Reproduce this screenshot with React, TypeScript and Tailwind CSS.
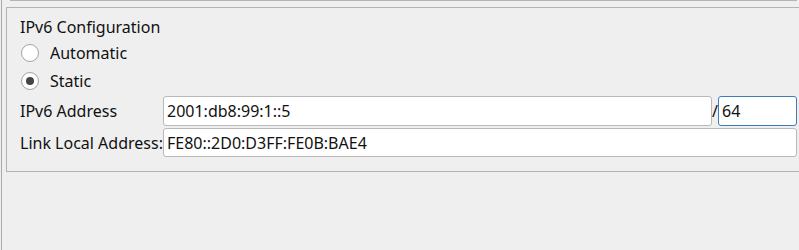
import React from 'react';

const Radio: React.FC<{ label: string; checked?: boolean }> = ({ label, checked }) => {
  return (
    <div className="flex items-center h-[28px]">
      <span className="ml-px flex h-[18px] w-[18px] shrink-0 items-center justify-center rounded-full border border-[#a3a3a3] bg-white">
        {checked && <span className="h-[8px] w-[8px] rounded-full bg-[#454545]" />}
      </span>
      <span className="ml-[11px] leading-[20px]">{label}</span>
    </div>
  );
};

const Field: React.FC<{ value: string; className?: string; focused?: boolean }> = ({ value, className, focused }) => {
  return (
    <div
      className={
        'flex items-center rounded-[3px] bg-white pl-[3px] leading-[20px] ' +
        (focused ? 'border border-[#3c7dba] ' : 'border border-[#b9b9b9] ') +
        (className ?? '')
      }
    >
      {value}
    </div>
  );
};

const App: React.FC = () => {
  return (
    <div className="w-[799px] h-[250px] overflow-hidden bg-[#efefef] font-['Noto_Sans',sans-serif] text-[16px] text-[#111111]">
      <div className="ml-px h-full border-l border-[#a9a9a9]">
        {/* bottom edge of the field above */}
        <div className="ml-[8px] h-px w-[787px] bg-[#b4b4b4]" />

        {/* IPv6 group box */}
        <div className="mt-[6px] ml-[4px] h-[165px] border-t border-l border-b border-[#b3b3b3] pl-[13px] pt-[9px]">
          <div className="h-[20px] leading-[20px]">IPv6 Configuration</div>

          <div className="mt-[2px]">
            <Radio label="Automatic" />
            <Radio label="Static" checked />
          </div>

          <div className="mt-px flex h-[30px] items-stretch">
            <div className="flex w-[143px] shrink-0 items-center">IPv6 Address</div>
            <Field value="2001:db8:99:1::5" className="w-[549px]" />
            <div className="flex w-[6px] items-center justify-center">/</div>
            <Field value="64" className="w-[79px]" focused />
          </div>

          <div className="mt-[2px] flex h-[29px] items-stretch">
            <div className="flex w-[143px] shrink-0 items-center whitespace-nowrap">Link Local Address:</div>
            <Field value="FE80::2D0:D3FF:FE0B:BAE4" className="w-[634px]" />
          </div>
        </div>
      </div>
    </div>
  );
};

export default App;
